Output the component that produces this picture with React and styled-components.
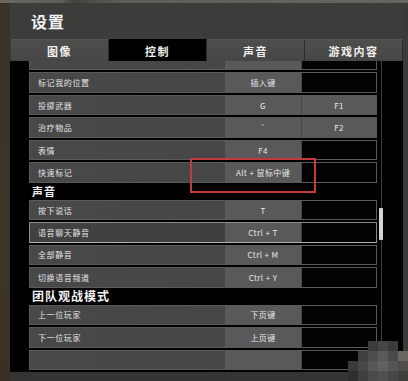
import React from "react";
import styled, { createGlobalStyle } from "styled-components";

const GlobalStyle = createGlobalStyle`
  html, body {
    margin: 0;
    padding: 0;
    background: #2f2b26;
    font-family: "Noto Sans CJK SC", "Noto Sans", "Liberation Sans", sans-serif;
  }
`;

const Page = styled.div`
  position: relative;
  width: 408px;
  height: 381px;
  overflow: hidden;
  display: flex;
  flex-direction: column;
  background: linear-gradient(90deg, #3d3429 0px, #332d26 10px, #3a3834 10px);
`;

const TopStrip = styled.div`
  height: 3px;
  background: linear-gradient(90deg, #6a6862 0%, #5d5c58 15%, #444340 18%, #5e5d59 30%, #66655f 100%);
`;

const Body = styled.div`
  flex: 1;
  display: flex;
`;

const Side = styled.div`
  width: ${({ w }) => w}px;
  background: ${({ bg }) => bg};
`;

const Panel = styled.div`
  width: 393px;
  display: flex;
  flex-direction: column;
  background: #3c3c3a;
`;

const Header = styled.div`
  height: 36px;
  display: flex;
  align-items: center;
  padding-left: 21px;
  color: #f2f2f2;
  font-size: 16px;
  font-weight: 700;
  letter-spacing: 1px;
`;

const Tabs = styled.div`
  height: 22px;
  display: flex;
  padding-left: 1px;
`;

const Tab = styled.div`
  flex: 1;
  display: flex;
  align-items: center;
  justify-content: center;
  font-size: 11px;
  font-weight: 700;
  letter-spacing: 1.5px;
  color: #f0f0f0;
  background: ${({ active }) => (active ? "#000" : "linear-gradient(#4e4e4c, #464644)")};
  border-right: 1px solid #2c2c2a;
  border-top: 1px solid ${({ active }) => (active ? "#000" : "#555553")};
`;

const Content = styled.div`
  height: 311px;
  background: #000;
  display: flex;
  overflow: hidden;
`;

const List = styled.div`
  width: 348px;
  margin-left: 19px;
  margin-top: -11px;
  display: flex;
  flex-direction: column;
`;

const Row = styled.div`
  height: 21px;
  margin-bottom: 2px;
  box-sizing: border-box;
  display: flex;
  border: 1px solid ${({ hl }) => (hl ? "#8a8a88" : "#5a5a58")};
  border-bottom-color: ${({ hl }) => (hl ? "#b0b0ae" : "#5a5a58")};
  background: ${({ hl }) =>
    hl
      ? "linear-gradient(90deg, #414141 0%, #3e3e3e 85%, #2e2e2e 100%)"
      : "linear-gradient(90deg, #484848 0%, #464646 85%, #3c3c3c 100%)"};
`;

const Label = styled.div`
  flex: 1;
  display: flex;
  align-items: center;
  padding-left: 8px;
  font-size: 8px;
  letter-spacing: 0.6px;
  color: #e4e4e4;
`;

const Key = styled.div`
  width: ${({ w }) => w}px;
  margin-left: ${({ ml }) => ml}px;
  display: flex;
  align-items: center;
  justify-content: center;
  font-size: 8px;
  letter-spacing: 0.4px;
  color: #e8e8e8;
  background: ${({ empty }) => (empty ? "#030303" : "#595959")};
`;

const Section = styled.div`
  height: 15px;
  display: flex;
  align-items: flex-end;
  padding-left: 3px;
  padding-bottom: 1px;
  box-sizing: border-box;
  font-size: ${({ big }) => (big ? 12 : 11)}px;
  font-weight: 700;
  letter-spacing: 1px;
  color: #f0f0f0;
`;

const Track = styled.div`
  position: relative;
  width: 1px;
  margin-left: 4px;
  background: #3e3e3e;
`;

const Thumb = styled.div`
  position: absolute;
  left: -2px;
  top: 147px;
  width: 4px;
  height: 32px;
  background: #d4d4d4;
  border-radius: 1px;
`;

const Footer = styled.div`
  flex: 1;
  background: #343432;
`;

const RedBox = styled.div`
  position: absolute;
  left: 190px;
  top: 158px;
  width: 126px;
  height: 35px;
  box-sizing: border-box;
  border: 2px solid #c43a3d;
`;

const Mosaic = styled.svg`
  position: absolute;
  right: 0;
  bottom: 0;
`;

const rows1 = [
  ["", "", ""],
  ["标记我的位置", "插入键", ""],
  ["投掷武器", "G", "F1"],
  ["治疗物品", "`", "F2"],
  ["表情", "F4", ""],
  ["快速标记", "Alt + 鼠标中键", ""],
];

const rows2 = [
  ["按下说话", "T", ""],
  ["语音聊天静音", "Ctrl + T", "", true],
  ["全部静音", "Ctrl + M", ""],
  ["切换语音频道", "Ctrl + Y", ""],
];

const rows3 = [
  ["上一位玩家", "下页键", ""],
  ["下一位玩家", "上页键", ""],
  ["", "", ""],
];

const Bind = ({ label, k1, k2, hl }) => (
  <Row hl={hl}>
    <Label>{label}</Label>
    <Key w={76} ml={0}>{k1}</Key>
    <Key w={74} ml={1} empty={!k2}>{k2}</Key>
  </Row>
);

const mosaic = [
  [20, 0, "#3b3b3b"], [30, 0, "#454545"], [40, 0, "#3a3a3a"],
  [10, 10, "#404040"], [20, 10, "#4d4d4d"], [30, 10, "#5a5a5a"], [40, 10, "#4a4a4a"], [50, 10, "#6b665e"],
  [0, 20, "#3a3a3a"], [10, 20, "#474747"], [20, 20, "#575757"], [30, 20, "#606060"], [40, 20, "#555555"], [50, 20, "#4f4d49"],
  [0, 30, "#2e2e2e"], [10, 30, "#3f3f3f"], [20, 30, "#4a4a4a"], [30, 30, "#505050"], [40, 30, "#474747"], [50, 30, "#3f3e3b"],
];

export default function App() {
  return (
    <>
      <GlobalStyle />
      <Page>
        <TopStrip />
        <Body>
          <Side w={10} bg="linear-gradient(#3a3127, #3e3529 60%, #3a3024)" />
          <Panel>
            <Header>设置</Header>
            <Tabs>
              <Tab>图像</Tab>
              <Tab active>控制</Tab>
              <Tab>声音</Tab>
              <Tab>游戏内容</Tab>
            </Tabs>
            <Content>
              <List>
                {rows1.map(([l, a, b], i) => (
                  <Bind key={i} label={l} k1={a} k2={b} />
                ))}
                <Section>声音</Section>
                {rows2.map(([l, a, b, hl], i) => (
                  <Bind key={i} label={l} k1={a} k2={b} hl={hl} />
                ))}
                <Section big>团队观战模式</Section>
                {rows3.map(([l, a, b], i) => (
                  <Bind key={i} label={l} k1={a} k2={b} />
                ))}
              </List>
              <Track>
                <Thumb />
              </Track>
            </Content>
            <Footer />
          </Panel>
          <Side w={5} bg="linear-gradient(#3a3a38, #3c3a36)" />
        </Body>
        <RedBox />
        <Mosaic width="60" height="40" viewBox="0 0 60 40">
          {mosaic.map(([x, y, c], i) => (
            <rect key={i} x={x} y={y} width="10" height="10" fill={c} />
          ))}
        </Mosaic>
      </Page>
    </>
  );
}
